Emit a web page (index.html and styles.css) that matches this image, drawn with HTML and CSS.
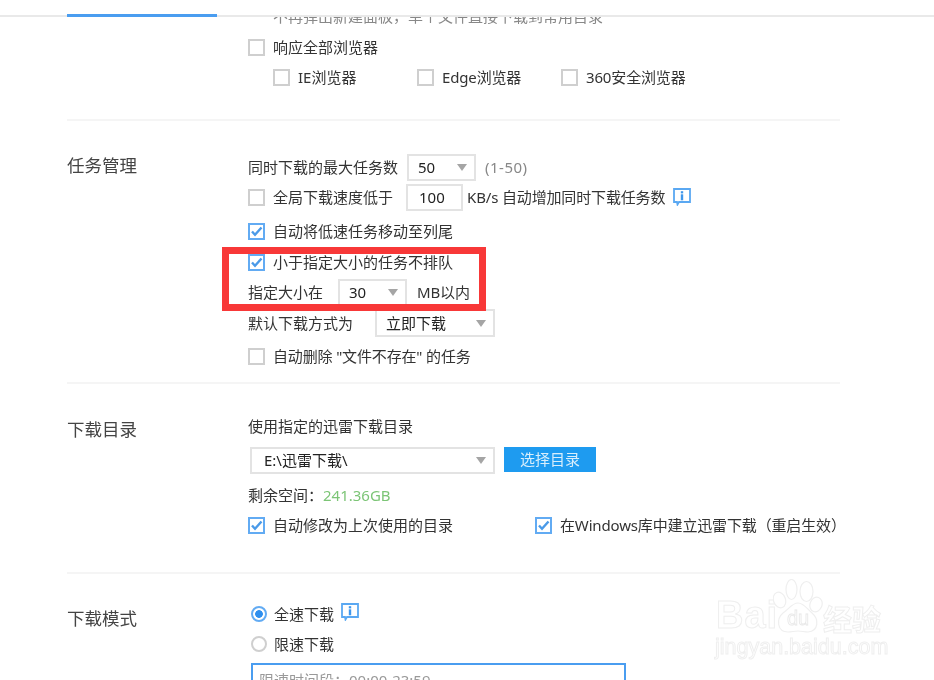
FILE: index.html
```html
<!DOCTYPE html>
<html lang="zh-CN">
<head>
<meta charset="utf-8">
<title>设置</title>
<link rel="stylesheet" href="styles.css">
</head>
<body>
<div class="page">
  <header class="topbar"><div class="tab"></div></header>
  <main class="content">
    <section class="section sec-browser">
      <div class="label"></div>
      <div class="body">
        <div class="clip"><div class="clip-text">不再弹出新建面板，单个文件直接下载到常用目录</div></div>
        <div class="row gap-8"><span class="cb"></span><span>响应全部浏览器</span></div>
        <div class="row indent">
          <div class="opt"><span class="cb"></span><span>IE浏览器</span></div>
          <div class="opt"><span class="cb"></span><span class="narrow">Edge浏览器</span></div>
          <div class="opt"><span class="cb"></span><span class="narrow">360安全浏览器</span></div>
        </div>
      </div>
    </section>

    <section class="section sec-task">
      <div class="label label-task">任务管理</div>
      <div class="body">
        <div class="row">
          <span>同时下载的最大任务数</span>
          <div class="select s-50 ml-9"><span>50</span><i class="arrow"></i></div>
          <span class="hint">(1-50)</span>
        </div>
        <div class="row">
          <span class="cb"></span><span>全局下载速度低于</span>
          <div class="input ml-13">100</div>
          <span class="ml-4 narrow">KB/s 自动增加同时下载任务数</span>
          <svg class="info ml-8" viewBox="0 0 18 18" aria-hidden="true"><path d="M1 1h16v13H6l-1.500 2.500L4 14H1z" fill="#fff" stroke="#5aa8f2" stroke-width="1.800"/><rect x="7.800" y="3.200" width="2.400" height="2.200" fill="#3f97ec"/><rect x="7.800" y="6.300" width="2.400" height="6" fill="#3f97ec"/></svg>
        </div>
        <div class="row gap-4"><span class="cb on"><svg viewBox="0 0 13 13" aria-hidden="true"><path d="M2 6.500l3 3.200L11.500 2.500" fill="none" stroke="#4a9ae8" stroke-width="2.400"/></svg></span><span>自动将低速任务移动至列尾</span></div>
        <div class="row gap-1"><span class="cb on"><svg viewBox="0 0 13 13" aria-hidden="true"><path d="M2 6.500l3 3.200L11.500 2.500" fill="none" stroke="#4a9ae8" stroke-width="2.400"/></svg></span><span>小于指定大小的任务不排队</span></div>
        <div class="row">
          <span>指定大小在</span>
          <div class="select s-30 ml-15"><span>30</span><i class="arrow"></i></div>
          <span class="ml-10 narrow">MB以内</span>
        </div>
        <div class="row gap-1">
          <span>默认下载方式为</span>
          <div class="select s-mode ml-22"><span>立即下载</span><i class="arrow"></i></div>
        </div>
        <div class="row gap-3"><span class="cb"></span><span class="narrow">自动删除 "文件不存在" 的任务</span></div>
      </div>
    </section>

    <section class="section sec-dir">
      <div class="label label-dir">下载目录</div>
      <div class="body">
        <div class="row"><span>使用指定的迅雷下载目录</span></div>
        <div class="row gap-4">
          <div class="select s-path"><span>E:\迅雷下载\</span><i class="arrow"></i></div>
          <div class="button">选择目录</div>
        </div>
        <div class="row gap-5"><span>剩余空间：</span><span class="free">241.36GB</span></div>
        <div class="row split">
          <div class="pair"><span class="cb on"><svg viewBox="0 0 13 13" aria-hidden="true"><path d="M2 6.500l3 3.200L11.500 2.500" fill="none" stroke="#4a9ae8" stroke-width="2.400"/></svg></span><span>自动修改为上次使用的目录</span></div>
          <div class="pair"><span class="cb on"><svg viewBox="0 0 13 13" aria-hidden="true"><path d="M2 6.500l3 3.200L11.500 2.500" fill="none" stroke="#4a9ae8" stroke-width="2.400"/></svg></span><span class="narrow">在Windows库中建立迅雷下载（重启生效）</span></div>
        </div>
      </div>
    </section>

    <section class="section sec-mode">
      <div class="label label-mode">下载模式</div>
      <div class="body">
        <div class="row"><span class="radio on"></span><span>全速下载</span>
          <svg class="info info-up ml-7" viewBox="0 0 18 18" aria-hidden="true"><path d="M1 1h16v13H6l-1.500 2.500L4 14H1z" fill="#fff" stroke="#5aa8f2" stroke-width="1.800"/><rect x="7.800" y="3.200" width="2.400" height="2.200" fill="#3f97ec"/><rect x="7.800" y="6.300" width="2.400" height="6" fill="#3f97ec"/></svg>
        </div>
        <div class="row tight"><span class="radio"></span><span>限速下载</span></div>
        <div class="limit">限速时间段：00:00-23:59</div>
      </div>
    </section>
  </main>

  <div class="redbox"></div>

  <div class="mark">
    <div class="mark-logo">
      <span class="mark-bai">Bai</span>
      <svg class="mark-paw" viewBox="0 0 50 54" aria-hidden="true">
        <g fill="#fff" stroke="#efefef" stroke-width="1.200">
          <ellipse cx="6.500" cy="21" rx="6" ry="8" transform="rotate(-20 6.500 21)"/>
          <ellipse cx="18.500" cy="10.500" rx="5.500" ry="10"/>
          <ellipse cx="33.500" cy="12.500" rx="6.500" ry="10"/>
          <ellipse cx="43" cy="25.500" rx="6" ry="7.500" transform="rotate(20 43 25.500)"/>
          <path d="M25 24c6 0 9 6 14 10 7 6 7 18-4 19-4 0-6-1-10-1s-6 1-10 1C4 53 3 40 10 34c6-4 9-10 15-10z"/>
        </g>
        <text x="25" y="46" text-anchor="middle" class="mark-du">du</text>
      </svg>
      <span class="mark-cn">经验</span>
    </div>
    <div class="mark-url">jingyan.baidu.com</div>
  </div>
</div>
</body>
</html>
```

FILE: styles.css
```css
* { box-sizing: border-box; }
html, body { margin: 0; padding: 0; background: #fff; }
.page {
  position: relative;
  width: 934px;
  height: 680px;
  overflow: hidden;
  background: #fff;
  color: #333;
  font: 15px/20px "Noto Sans", "Noto Sans CJK SC", sans-serif;
  filter: blur(.4px);
}
.topbar {
  height: 17px;
  padding-left: 67px;
  display: flex;
  align-items: flex-end;
  border-bottom: 2px solid #e9e9e9;
}
.tab { width: 150px; height: 3px; margin-bottom: -2px; background: #4a9df0; }
.content { width: 840px; padding-left: 67px; }
.section { display: flex; border-top: 2px solid #f5f5f5; }
.sec-browser { border-top: 0; height: 102px; }
.sec-task { height: 263px; padding-top: 31px; }
.sec-dir { height: 190px; padding-top: 27px; }
.sec-mode { height: 107px; padding-top: 25px; }
.label { flex: 0 0 181px; height: 30px; line-height: 30px; font-size: 17.500px; color: #444; }
.label-task { margin-top: -2px; }
.label-dir { margin-top: 3px; }
.label-mode { margin-top: 4px; }
.body { flex: 1; min-width: 0; }
.clip { height: 7px; margin-left: 25px; overflow: hidden; color: #888; }
.clip-text { margin-top: -13px; line-height: 24px; }
.row { display: flex; align-items: center; height: 30px; white-space: nowrap; }
.tight { height: 29px; }
.narrow { letter-spacing: -.15px; }
.gap-1 { margin-top: 1px; }
.gap-3 { margin-top: 3px; }
.gap-4 { margin-top: 4px; }
.gap-5 { margin-top: 5px; }
.gap-8 { margin-top: 8px; }
.ml-4 { margin-left: 4px; }
.ml-7 { margin-left: 7px; }
.ml-8 { margin-left: 8px; }
.ml-9 { margin-left: 9px; }
.ml-10 { margin-left: 10px; }
.ml-13 { margin-left: 13px; }
.ml-15 { margin-left: 15px; }
.ml-22 { margin-left: 22px; }
.indent { padding-left: 25px; }
.opt { display: flex; align-items: center; width: 144px; }
.pair { flex: none; display: flex; align-items: center; }
.pair:first-child { width: 287px; }
.cb {
  flex: none;
  width: 17px;
  height: 17px;
  margin-right: 8px;
  border: 2px solid #cfcfcf;
  background: #fff;
  display: flex;
}
.cb.on { border-color: #62abf3; }
.cb svg { width: 13px; height: 13px; }
.radio {
  flex: none;
  width: 16px;
  height: 16px;
  margin: 0 7px 0 3px;
  border: 2px solid #cfcfcf;
  border-radius: 50%;
  background: #fff;
}
.radio.on { border-color: #62abf3; background: radial-gradient(circle, #2f8fee 0 3.500px, #fff 4.200px); }
.select {
  flex: none;
  display: flex;
  align-items: center;
  justify-content: space-between;
  height: 27px;
  padding: 0 7px 0 9px;
  background: #fff;
  border: 2px solid #e3e3e3;
  color: #222;
}
.s-50 { width: 69px; }
.s-30 { width: 69px; }
.s-mode { width: 120px; height: 28px; }
.s-path { width: 245px; margin-left: 2px; padding-left: 12px; }
.arrow { width: 0; height: 0; border-style: solid; border-width: 7px 5.500px 0; border-color: #a5a5a5 transparent transparent; }
.input {
  flex: none;
  width: 57px;
  height: 27px;
  line-height: 23px;
  padding-left: 11px;
  border: 2px solid #e3e3e3;
  color: #222;
}
.hint { margin-left: 9px; color: #888; letter-spacing: .5px; }
.free { color: #7cc576; }
.info { flex: none; width: 18px; height: 18px; }
.info-up { margin-top: -4px; }
.button {
  flex: none;
  width: 92px;
  height: 25px;
  margin: -2px 0 0 9px;
  line-height: 25px;
  text-align: center;
  background: #1e9bf0;
  color: #d8eefc;
}
.limit {
  width: 375px;
  height: 40px;
  margin: 5px 0 0 3px;
  padding: 5px 0 0 6px;
  border: 2px solid #4a9df0;
  color: #999;
}
.redbox {
  position: absolute;
  left: 222px;
  top: 247px;
  width: 264px;
  height: 64px;
  border: 7px solid #f83838;
}
.mark {
  position: absolute;
  left: 715px;
  top: 579px;
  width: 172px;
  color: #fff;
  -webkit-text-stroke: 1px #efefef;
}
.mark-logo { display: flex; align-items: flex-end; height: 54px; padding-left: 1px; }
.mark-bai { flex: none; width: 57px; font: 700 38px/36px "Liberation Sans", sans-serif; letter-spacing: 1px; }
.mark-paw { flex: none; width: 50px; height: 54px; }
.mark-du { font: 400 20px "Liberation Sans", sans-serif; fill: #fff; stroke: #e8e8e8; stroke-width: .8px; }
.mark-cn { flex: none; font: 700 29px/30px "Noto Sans CJK SC", sans-serif; }
.mark-url { margin-top: 3px; font: 400 21.500px/22px "Liberation Sans", sans-serif; white-space: nowrap; }
```
